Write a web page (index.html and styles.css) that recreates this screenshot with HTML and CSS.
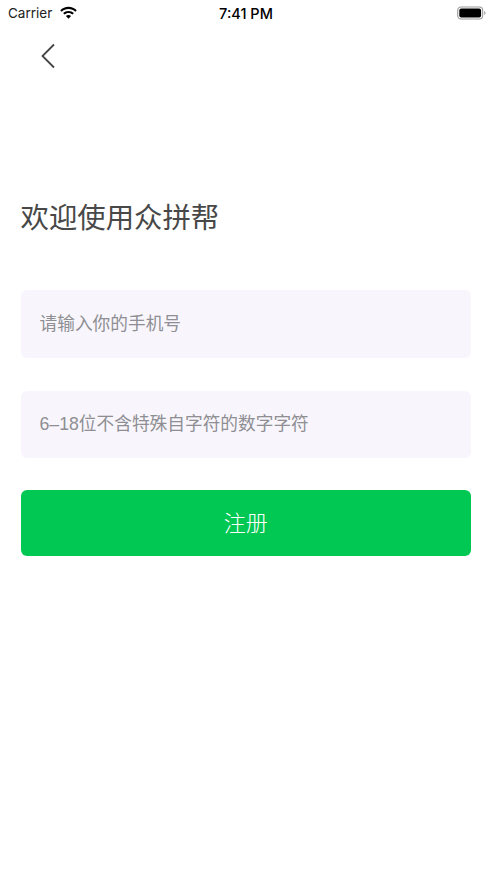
FILE: index.html
```html
<!DOCTYPE html>
<html lang="zh-CN">
<head>
<meta charset="utf-8">
<title>注册</title>
<link rel="stylesheet" href="styles.css">
</head>
<body>
<div class="status">
  <div class="status-left">
    <span class="carrier">Carrier</span>
    <svg class="wifi" viewBox="0 0 18 13" width="19" height="14"><path d="M9 2.600c2.500 0 4.800 1 6.500 2.600l1.300-1.400C14.800 1.800 12 .6 9 .6S3.200 1.800 1.200 3.800l1.300 1.400C4.200 3.600 6.500 2.600 9 2.600z"/><path d="M9 6.500c1.500 0 2.800.6 3.800 1.500l1.300-1.400C12.800 5.300 11 4.500 9 4.500S5.200 5.300 3.900 6.600L5.200 8C6.200 7.100 7.500 6.500 9 6.500z"/><path d="M9 8.400c-1 0-1.800.4-2.400 1L9 12l2.400-2.600C10.800 8.800 10 8.400 9 8.400z"/></svg>
  </div>
  <span class="time">7:41 PM</span>
  <div class="status-right">
    <svg class="battery" viewBox="0 0 29 14" width="29" height="14"><rect x=".7" y="1" width="25" height="12" rx="3.400" fill="none" stroke="#9a9a9a" stroke-width="1.100"/><rect x="2.300" y="2.600" width="21.800" height="8.800" rx="2" fill="#000"/><path d="M27.200 5.200c.9.300 1.300 1 1.300 1.800s-.4 1.500-1.300 1.800z" fill="#9a9a9a"/></svg>
  </div>
</div>
<header class="nav">
  <svg class="back" viewBox="0 0 16 26" width="16" height="26"><path d="M14 1.500 2.500 13 14 24.500" fill="none" stroke="#444" stroke-width="1.800"/></svg>
</header>
<main class="content">
  <h1 class="title">欢迎使用众拼帮</h1>
  <input class="field field-phone" type="text" placeholder="请输入你的手机号">
  <input class="field field-pass" type="text" placeholder="6–18位不含特殊自字符的数字字符">
  <button class="submit" type="button">注册</button>
</main>
</body>
</html>
```
FILE: styles.css
```css
* { box-sizing: border-box; }
html, body { margin: 0; padding: 0; background: #fff; }
body {
  width: 492px;
  height: 878px;
  overflow: hidden;
  font-family: "Liberation Sans", "Noto Sans CJK SC", sans-serif;
}
.status {
  display: grid;
  grid-template-columns: 1fr auto 1fr;
  align-items: center;
  height: 26px;
  padding: 0 6px 0 8px;
  color: #000;
}
.status-left { display: flex; align-items: center; gap: 7px; }
.carrier { font-family: Inter, sans-serif; font-size: 13.500px; color: #222; }
.wifi { fill: #000; margin-top: -1px; }
.time { font-family: Inter, sans-serif; font-size: 14.500px; font-weight: 500; margin-right: 2px; }
.status-right { display: flex; justify-content: flex-end; }
.nav { height: 60px; padding: 17px 0 0 40px; }
.back { display: block; }
.content {
  display: flex;
  flex-direction: column;
  padding: 0 21px 0 20.500px;
}
.title {
  margin: 109px 0 0;
  height: 42px;
  line-height: 42px;
  font-size: 28.400px;
  font-weight: 400;
  color: #484848;
  font-family: "Noto Sans CJK SC", sans-serif;
}
.field {
  display: block;
  width: 100%;
  height: 68px;
  border: 0;
  outline: 0;
  border-radius: 6px;
  background: #f8f6fc;
  padding: 0 19px;
  font-size: 17.700px;
  font-family: "Liberation Sans", "Noto Sans CJK SC", sans-serif;
}
.field::placeholder { color: #8e8e93; opacity: 1; }
.field-phone { margin-top: 53px; }
.field-pass { margin-top: 32.500px; height: 67.500px; }
.submit {
  display: block;
  margin-top: 32px;
  width: 100%;
  height: 66px;
  border: 0;
  border-radius: 6px;
  background: #00c853;
  color: #fff;
  padding: 0 0 4px;
  font-size: 22px;
  font-weight: 300;
  font-family: "Noto Sans CJK SC", sans-serif;
}
```
